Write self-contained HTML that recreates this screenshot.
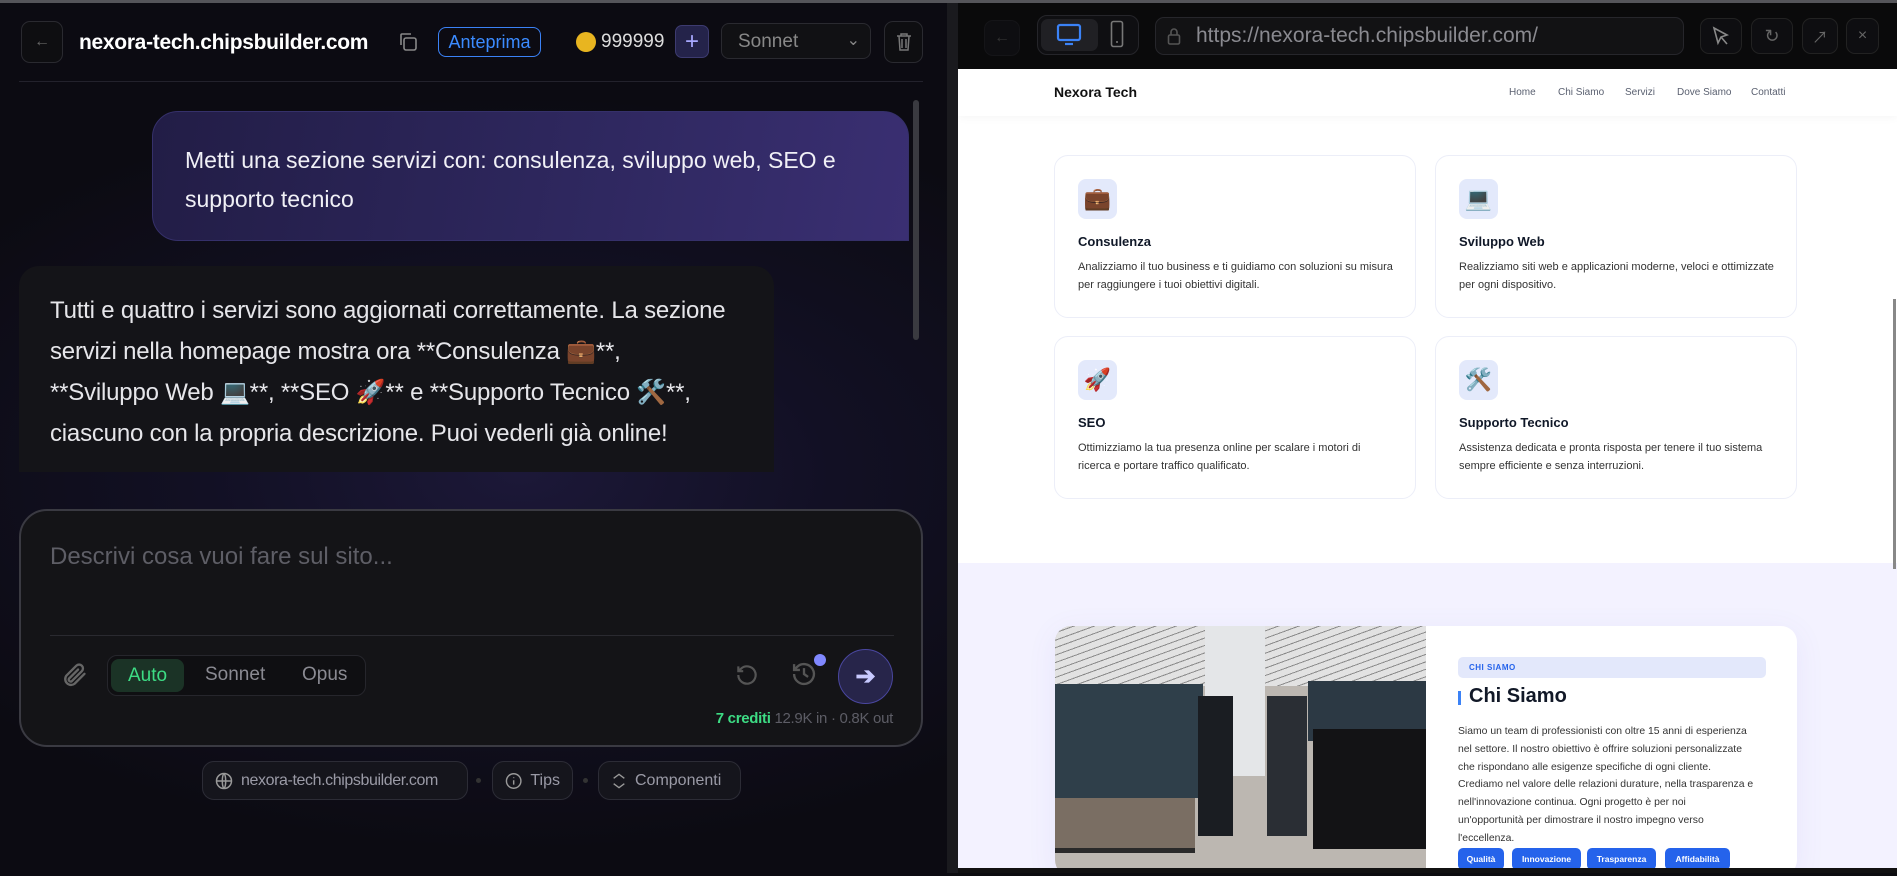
<!DOCTYPE html>
<html><head><meta charset="utf-8"><style>
*{box-sizing:border-box;margin:0;padding:0}
body{width:1897px;height:873px;overflow:hidden;background:#0c0c0f;font-family:"Liberation Sans","Noto Sans CJK SC",sans-serif;position:relative}
.a{position:absolute}
.left{left:0;top:0;width:950px;height:873px;background:radial-gradient(ellipse 700px 380px at 520px 470px,#1c1838 0%,#121024 45%,#0c0b12 100%)}
.btn{border:1px solid #2a2a30;border-radius:9px;background:#0e0e11}
.card{background:#fff;border:1px solid #eceef8;border-radius:14px}
.ib{background:#e3e9fb;border-radius:8px;width:39px;height:40px;font-size:22px;display:flex;align-items:center;justify-content:center}
.ct{font-size:13px;font-weight:bold;color:#101828}
.cd{font-size:11px;color:#333;line-height:18px;white-space:nowrap}
.chip{border:1px solid #2c2c36;background:#15151c;border-radius:12px;height:39px;color:#9a9aa6;font-size:16px;display:flex;align-items:center;gap:8px;padding:0 12px;white-space:nowrap}
.tag{background:#2563eb;color:#fff;font-size:8.5px;font-weight:bold;border-radius:5px;height:22px;display:flex;align-items:center;justify-content:center;white-space:nowrap}
</style></head><body>
<div class="a" style="left:0;top:0;width:1897px;height:3px;background:#55555a"></div>
<div class="a left" style="top:3px"></div>
<div class="a btn" style="left:21px;top:21px;width:42px;height:42px;color:#666;font-size:16px;display:flex;align-items:center;justify-content:center">←</div>
<div class="a" style="left:79px;top:31px;color:#fff;font-size:21px;font-weight:bold;letter-spacing:-0.3px">nexora-tech.chipsbuilder.com</div>
<svg class="a" style="left:397px;top:31px" width="22" height="22" viewBox="0 0 22 22" fill="none" stroke="#888" stroke-width="1.6"><rect x="7" y="7" width="12" height="12" rx="2"/><path d="M4 14V4a1 1 0 0 1 1-1h9"/></svg>
<div class="a" style="left:438px;top:27px;width:103px;height:30px;border:1.5px solid #3b82f6;border-radius:8px;color:#3b8bff;font-size:18px;display:flex;align-items:center;justify-content:center">Anteprima</div>
<div class="a" style="left:576px;top:32px;width:20px;height:20px;border-radius:50%;background:#e8b520"></div>
<div class="a" style="left:601px;top:31px;color:#ddd;font-size:19px">999999</div>
<div class="a" style="left:675px;top:25px;width:34px;height:33px;border-radius:7px;background:#24234a;border:1px solid #3d3b70;color:#a8a8ff;font-size:24px;display:flex;align-items:center;justify-content:center">+</div>
<div class="a" style="left:721px;top:23px;width:150px;height:36px;border:1px solid #2a2a30;border-radius:8px;background:#111114;color:#888;font-size:19px;padding:7px 16px">Sonnet<span style="position:absolute;right:10px;top:6px;font-size:16px">⌄</span></div>
<div class="a btn" style="left:884px;top:21px;width:39px;height:42px;display:flex;align-items:center;justify-content:center"><svg width="16" height="20" viewBox="0 0 16 20" fill="none" stroke="#777" stroke-width="1.5"><path d="M1 4h14M5 4V2h6v2M3 4l1 14h8l1-14M6 7v9M10 7v9"/></svg></div>
<div class="a" style="left:19px;top:81px;width:904px;height:1px;background:#23222c"></div>
<div class="a" style="left:913px;top:100px;width:6px;height:240px;border-radius:3px;background:#3a3a40"></div>
<div class="a" style="left:152px;top:111px;width:757px;height:130px;border-radius:26px 26px 0 26px;background:linear-gradient(100deg,#221d46,#2f2860 60%,#3a2f72);border:1px solid #35306a;padding:29px 32px;color:#f0f0f6;font-size:23px;line-height:39px;white-space:nowrap">Metti una sezione servizi con: consulenza, sviluppo web, SEO e<br>supporto tecnico</div>
<div class="a" style="left:19px;top:266px;width:755px;height:206px;border-radius:20px 20px 0 0;background:#141418;padding:24px 31px;color:#e6e6ea;font-size:24px;line-height:41px;white-space:nowrap;letter-spacing:-0.2px">Tutti e quattro i servizi sono aggiornati correttamente. La sezione<br>servizi nella homepage mostra ora **Consulenza 💼**,<br>**Sviluppo Web 💻**, **SEO 🚀** e **Supporto Tecnico 🛠️**,<br>ciascuno con la propria descrizione. Puoi vederli già online!</div>
<div class="a" style="left:19px;top:509px;width:904px;height:238px;border-radius:28px;background:#141417;border:2px solid #3a3a42"></div>
<div class="a" style="left:50px;top:543px;color:#5e5e66;font-size:24px">Descrivi cosa vuoi fare sul sito...</div>
<div class="a" style="left:50px;top:635px;width:844px;height:1px;background:#2a2a30"></div>
<svg class="a" style="left:60px;top:660px" width="28" height="30" viewBox="0 0 24 24" fill="none" stroke="#666" stroke-width="2" stroke-linecap="round"><path d="M21 11l-8.5 8.5a5 5 0 0 1-7-7L14 4a3.3 3.3 0 0 1 4.7 4.7L10 17.4a1.7 1.7 0 0 1-2.3-2.3L15.5 7.3"/></svg>
<div class="a" style="left:107px;top:655px;width:259px;height:41px;border:1px solid #26262c;border-radius:10px;background:#0f0f12"></div>
<div class="a" style="left:111px;top:659px;width:73px;height:33px;border-radius:8px;background:#1b3326;color:#3ddc84;font-size:19px;display:flex;align-items:center;justify-content:center">Auto</div>
<div class="a" style="left:205px;top:664px;color:#8a8a92;font-size:19px">Sonnet</div>
<div class="a" style="left:302px;top:664px;color:#8a8a92;font-size:19px">Opus</div>
<svg class="a" style="left:734px;top:662px" width="26" height="26" viewBox="0 0 24 24" fill="none" stroke="#555" stroke-width="2"><path d="M4 12a8 8 0 1 0 2.5-5.8L4 8.5"/><path d="M4 4v4.5h4.5"/></svg>
<svg class="a" style="left:790px;top:660px" width="28" height="28" viewBox="0 0 24 24" fill="none" stroke="#555" stroke-width="2"><path d="M3.5 12a8.5 8.5 0 1 0 2.5-6L3.5 8.5M3.5 3.5v5h5M12 7v5l3.5 2.5"/></svg>
<div class="a" style="left:814px;top:654px;width:12px;height:12px;border-radius:50%;background:#8088ff"></div>
<div class="a" style="left:838px;top:649px;width:55px;height:55px;border-radius:50%;background:#27254a;border:1.5px solid #4a47a0;color:#c8caff;font-size:24px;font-weight:bold;display:flex;align-items:center;justify-content:center">➔</div>
<div class="a" style="left:650px;top:710px;width:243px;text-align:right;font-size:15px;color:#5d5d66;white-space:nowrap;letter-spacing:-0.3px"><b style="color:#3ddc84">7 crediti</b> 12.9K in · 0.8K out</div>
<div class="a chip" style="left:202px;top:761px;width:266px"><svg width="18" height="18" viewBox="0 0 24 24" fill="none" stroke="#999" stroke-width="2"><circle cx="12" cy="12" r="10"/><path d="M2 12h20M12 2c3 3 3 17 0 20M12 2c-3 3-3 17 0 20"/></svg><span style="letter-spacing:-0.4px">nexora-tech.chipsbuilder.com</span></div>
<div class="a" style="left:476px;top:778px;width:5px;height:5px;border-radius:50%;background:#333"></div>
<div class="a chip" style="left:492px;top:761px;width:81px"><svg width="18" height="18" viewBox="0 0 24 24" fill="none" stroke="#999" stroke-width="2"><circle cx="12" cy="12" r="10"/><path d="M12 11v6M12 7v1"/></svg>Tips</div>
<div class="a" style="left:583px;top:778px;width:5px;height:5px;border-radius:50%;background:#333"></div>
<div class="a chip" style="left:598px;top:761px;width:143px"><svg width="16" height="18" viewBox="0 0 24 24" fill="none" stroke="#999" stroke-width="2"><path d="M4 8l8-6 8 6M4 16l8 6 8-6"/></svg>Componenti</div>
<div class="a" style="left:947px;top:3px;width:11px;height:870px;background:#1a1a1e"></div>
<div class="a" style="left:958px;top:3px;width:939px;height:66px;background:#0a0a0b"></div>
<div class="a btn" style="left:984px;top:20px;width:36px;height:36px;border-color:#151518;color:#333;display:flex;align-items:center;justify-content:center">←</div>
<div class="a" style="left:1037px;top:15px;width:102px;height:40px;border:1px solid #25252a;border-radius:10px;background:#0f0f12"></div>
<div class="a" style="left:1041px;top:19px;width:57px;height:32px;border-radius:7px;background:#202024"></div>
<svg class="a" style="left:1056px;top:23px" width="26" height="24" viewBox="0 0 26 24" fill="none" stroke="#3b82f6" stroke-width="2.2"><rect x="2" y="2" width="22" height="15" rx="2"/><path d="M9 21h8"/></svg>
<svg class="a" style="left:1110px;top:20px" width="14" height="28" viewBox="0 0 14 28" fill="none" stroke="#777" stroke-width="1.6"><rect x="1.5" y="1.5" width="11" height="25" rx="2"/><path d="M6 22h2"/></svg>
<div class="a" style="left:1155px;top:17px;width:529px;height:38px;border:1px solid #26262b;border-radius:9px;background:#121214;color:#8a8a90;font-size:21px;padding:6px 0 0 40px">https://nexora-tech.chipsbuilder.com/</div>
<svg class="a" style="left:1167px;top:26px" width="14" height="20" viewBox="0 0 14 20" fill="none" stroke="#555" stroke-width="1.6"><rect x="1.5" y="9" width="11" height="9" rx="1.5"/><path d="M4 9V6a3 3 0 0 1 6 0v3"/></svg>
<div class="a btn" style="left:1700px;top:18px;width:42px;height:36px;border-color:#222;display:flex;align-items:center;justify-content:center"><svg width="18" height="20" viewBox="0 0 18 20" fill="none" stroke="#888" stroke-width="1.6"><path d="M2 2l4 15 3-6 6-2z"/><path d="M9 11l6 7"/></svg></div>
<div class="a btn" style="left:1751px;top:18px;width:42px;height:36px;border-color:#222;color:#666;font-size:18px;display:flex;align-items:center;justify-content:center">↻</div>
<div class="a btn" style="left:1802px;top:18px;width:36px;height:36px;border-color:#222;color:#666;font-size:16px;display:flex;align-items:center;justify-content:center">↗</div>
<div class="a btn" style="left:1846px;top:18px;width:33px;height:36px;border-color:#222;color:#666;font-size:16px;display:flex;align-items:center;justify-content:center">×</div>
<div class="a" style="left:958px;top:69px;width:939px;height:799px;background:#fff;overflow:hidden">
 <div class="a" style="left:0;top:0;width:939px;height:47px;background:#fff;box-shadow:0 2px 8px rgba(0,0,0,.04)"></div>
 <div class="a" style="left:96px;top:15px;font-size:14px;font-weight:bold;color:#111">Nexora Tech</div>
 <div class="a" style="left:551px;top:18px;font-size:10px;color:#5a6070">Home</div>
 <div class="a" style="left:600px;top:18px;font-size:10px;color:#5a6070">Chi Siamo</div>
 <div class="a" style="left:667px;top:18px;font-size:10px;color:#5a6070">Servizi</div>
 <div class="a" style="left:719px;top:18px;font-size:10px;color:#5a6070">Dove Siamo</div>
 <div class="a" style="left:793px;top:18px;font-size:10px;color:#5a6070">Contatti</div>
 <div class="a card" style="left:96px;top:86px;width:362px;height:163px"></div>
 <div class="a card" style="left:477px;top:86px;width:362px;height:163px"></div>
 <div class="a card" style="left:96px;top:267px;width:362px;height:163px"></div>
 <div class="a card" style="left:477px;top:267px;width:362px;height:163px"></div>
 <div class="a ib" style="left:120px;top:110px">💼</div>
 <div class="a ib" style="left:501px;top:110px">💻</div>
 <div class="a ib" style="left:120px;top:291px">🚀</div>
 <div class="a ib" style="left:501px;top:291px">🛠️</div>
 <div class="a ct" style="left:120px;top:165px">Consulenza</div>
 <div class="a ct" style="left:501px;top:165px">Sviluppo Web</div>
 <div class="a ct" style="left:120px;top:346px">SEO</div>
 <div class="a ct" style="left:501px;top:346px">Supporto Tecnico</div>
 <div class="a cd" style="left:120px;top:189px">Analizziamo il tuo business e ti guidiamo con soluzioni su misura<br>per raggiungere i tuoi obiettivi digitali.</div>
 <div class="a cd" style="left:501px;top:189px">Realizziamo siti web e applicazioni moderne, veloci e ottimizzate<br>per ogni dispositivo.</div>
 <div class="a cd" style="left:120px;top:370px">Ottimizziamo la tua presenza online per scalare i motori di<br>ricerca e portare traffico qualificato.</div>
 <div class="a cd" style="left:501px;top:370px">Assistenza dedicata e pronta risposta per tenere il tuo sistema<br>sempre efficiente e senza interruzioni.</div>
 <div class="a" style="left:0;top:494px;width:939px;height:310px;background:#f3f2ff"></div>
 <div class="a" style="left:97px;top:557px;width:742px;height:250px;background:#fff;border-radius:16px;box-shadow:0 6px 30px rgba(100,90,200,.08);overflow:hidden">
  <div class="a" style="left:0;top:0;width:371px;height:250px;background:#bcb7b1;overflow:hidden">
   <div class="a" style="left:0;top:0;width:371px;height:60px;background:repeating-linear-gradient(160deg,#e2e2e2 0 6px,#8a8a8a 6px 7px)"></div>
   <div class="a" style="left:150px;top:0;width:60px;height:150px;background:#e4e6e8"></div>
   <div class="a" style="left:0;top:58px;width:148px;height:114px;background:#2f3f4a"></div>
   <div class="a" style="left:143px;top:70px;width:35px;height:140px;background:#1a1d22"></div>
   <div class="a" style="left:212px;top:70px;width:40px;height:140px;background:#2a2e34"></div>
   <div class="a" style="left:253px;top:55px;width:118px;height:60px;background:#2c3944"></div>
   <div class="a" style="left:258px;top:103px;width:113px;height:120px;background:#131315"></div>
   <div class="a" style="left:0;top:172px;width:140px;height:50px;background:#7a6e63"></div>
   <div class="a" style="left:0;top:222px;width:140px;height:5px;background:#2a2a2a"></div>
  </div>
  <div class="a" style="left:403px;top:31px;width:308px;height:21px;background:#e3e8fb;border-radius:5px;color:#2563eb;font-size:8px;font-weight:bold;letter-spacing:.5px;padding:6px 0 0 11px">CHI SIAMO</div>
  <div class="a" style="left:403px;top:65px;width:3px;height:14px;background:#3b82f6"></div>
  <div class="a" style="left:414px;top:59px;font-size:20px;font-weight:bold;color:#111827">Chi Siamo</div>
  <div class="a" style="left:403px;top:97px;font-size:10.4px;line-height:17.8px;color:#333;white-space:nowrap">Siamo un team di professionisti con oltre 15 anni di esperienza<br>nel settore. Il nostro obiettivo è offrire soluzioni personalizzate<br>che rispondano alle esigenze specifiche di ogni cliente.<br>Crediamo nel valore delle relazioni durature, nella trasparenza e<br>nell'innovazione continua. Ogni progetto è per noi<br>un'opportunità per dimostrare il nostro impegno verso<br>l'eccellenza.</div>
  <div class="a tag" style="left:403px;top:222px;width:46px">Qualità</div>
  <div class="a tag" style="left:457px;top:222px;width:69px">Innovazione</div>
  <div class="a tag" style="left:532px;top:222px;width:69px">Trasparenza</div>
  <div class="a tag" style="left:610px;top:222px;width:65px">Affidabilità</div>
 </div>
 <div class="a" style="left:935px;top:230px;width:3px;height:270px;background:#888"></div>
</div>
<div class="a" style="left:958px;top:868px;width:939px;height:5px;background:#111"></div>
</body></html>
